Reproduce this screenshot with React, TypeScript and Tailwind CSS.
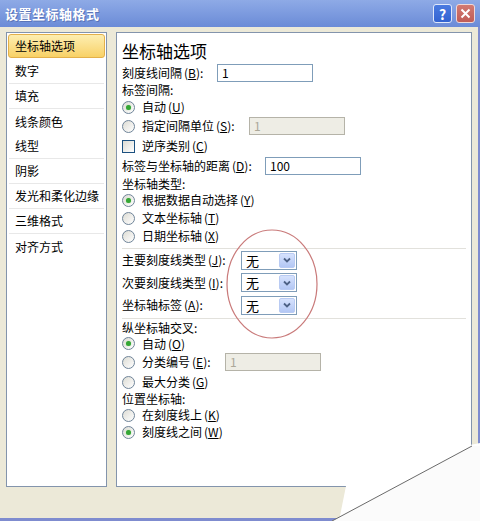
import React from "react"

function Key({ k }: { k: string }) {
  return (
    <span className="ml-[2px]">
      (<span className="underline">{k}</span>)
    </span>
  )
}

function Radio({ checked }: { checked?: boolean }) {
  return (
    <span className="flex h-[13px] w-[13px] shrink-0 items-center justify-center rounded-full border border-[#6f8499] bg-linear-to-br from-[#dddcd4] to-white">
      {checked && <span className="h-[5px] w-[5px] rounded-full bg-[#35a635] shadow-[0_0_1px_#7fd07f]" />}
    </span>
  )
}

function TextBox({ value, disabled, width }: { value: string; disabled?: boolean; width: string }) {
  return (
    <div
      className={
        disabled
          ? `flex h-[18px] ${width} items-center border border-[#b5b3a8] bg-[#eeede5] pl-[4px] text-[#aca899]`
          : `flex h-[18px] ${width} items-center border border-[#7f9db9] bg-white pl-[4px]`
      }
    >
      {value}
    </div>
  )
}

function Select() {
  return (
    <div className="flex h-[19px] w-[56px] items-center justify-between border border-[#7f9db9] bg-white p-px pl-[4px]">
      <span className="text-[13px]">无</span>
      <span className="flex h-[15px] w-[16px] items-center justify-center rounded-[2px] border border-[#b9cbf3] bg-linear-to-b from-[#d6e2fd] to-[#b3c7f4]">
        <svg width="8" height="6" viewBox="0 0 8 6">
          <path d="M1 1.5 L4 4.5 L7 1.5" fill="none" stroke="#4d6185" strokeWidth="1.8" />
        </svg>
      </span>
    </div>
  )
}

function RadioRow({ h, checked, children }: { h: string; checked?: boolean; children: React.ReactNode }) {
  return (
    <div className={`flex ${h} items-center`}>
      <Radio checked={checked} />
      <span className="ml-[7px] flex items-center">{children}</span>
    </div>
  )
}

const navItems = [
  { label: "数字", line: true },
  { label: "填充", line: true },
  { label: "线条颜色", line: false },
  { label: "线型", line: true },
  { label: "阴影", line: true },
  { label: "发光和柔化边缘", line: true },
  { label: "三维格式", line: true },
  { label: "对齐方式", line: false },
]

export default function App() {
  return (
    <div className="relative flex h-[521px] w-[480px] flex-col overflow-hidden bg-white font-['Noto_Sans_CJK_SC',sans-serif] text-[12px] leading-none text-black">
      {/* Title bar */}
      <div className="flex h-[27px] shrink-0 items-center justify-between bg-linear-to-b from-[#8eaae6] to-[#6b8bd7] pl-[5px] pr-[5px]">
        <span className="text-[13px] font-bold tracking-[0.5px] text-white [text-shadow:1px_1px_0_#5a74b8]">设置坐标轴格式</span>
        <div className="flex gap-[4px]">
          <div className="flex h-[19px] w-[19px] items-center justify-center rounded-[3px] border border-[#dfe8fb] bg-linear-to-b from-[#4a7ae0] to-[#3363d1] text-[14px] font-bold text-white">?</div>
          <div className="flex h-[19px] w-[19px] items-center justify-center rounded-[3px] border border-[#f0d8d6] bg-linear-to-b from-[#d27a72] to-[#c05c56]">
            <svg width="11" height="11" viewBox="0 0 11 11">
              <path d="M1.5 1.5 L9.5 9.5 M9.5 1.5 L1.5 9.5" stroke="white" strokeWidth="2" />
            </svg>
          </div>
        </div>
      </div>

      {/* Body */}
      <div className="flex flex-1 gap-[9px] border-b-[3px] border-r-2 border-[#7f8ccf] bg-[#ece9d8] pl-[6px] pt-[5px]">
        {/* Category list */}
        <div className="flex h-[455px] w-[101px] flex-col border border-[#8394ac] bg-white">
          <div className="mx-px mt-px flex h-[24px] items-center rounded-[3px] border border-[#e3b04a] bg-linear-to-b from-[#fdeeb0] to-[#f8d165] pl-[6px]">
            坐标轴选项
          </div>
          <div className="mt-px flex flex-col">
            {navItems.map(item => (
              <div
                key={item.label}
                className={
                  item.line
                    ? "mx-[2px] flex h-[25px] items-center border-b border-[#e8e8e8] pl-[6px]"
                    : "mx-[2px] flex h-[25px] items-center pl-[6px]"
                }
              >
                {item.label}
              </div>
            ))}
          </div>
        </div>

        {/* Options panel */}
        <div className="flex h-[455px] w-[356px] flex-col border border-[#8394ac] bg-white pl-[5px]">
          <div className="flex h-[31px] items-center pt-[4px] text-[17px]">坐标轴选项</div>

          <div className="flex h-[18px] items-center">
            <span className="flex w-[95px] items-center">刻度线间隔<Key k="B" />:</span>
            <TextBox value="1" width="w-[96px]" />
          </div>
          <div className="flex h-[16px] items-center">标签间隔:</div>
          <RadioRow h="h-[18px]" checked>
            自动<Key k="U" />
          </RadioRow>
          <div className="flex h-[20px] items-center">
            <span className="flex w-[127px] items-center">
              <Radio />
              <span className="ml-[7px] flex items-center">指定间隔单位<Key k="S" />:</span>
            </span>
            <TextBox value="1" width="w-[96px]" disabled />
          </div>
          <div className="flex h-[20px] items-center">
            <span className="h-[13px] w-[13px] border border-[#1c5180] bg-linear-to-br from-[#dcdbd3] to-white" />
            <span className="ml-[7px] flex items-center">逆序类别<Key k="C" /></span>
          </div>
          <div className="flex h-[20px] items-center">
            <span className="flex w-[143px] items-center">标签与坐标轴的距离<Key k="D" />:</span>
            <TextBox value="100" width="w-[96px]" />
          </div>
          <div className="flex h-[15px] items-center">坐标轴类型:</div>
          <RadioRow h="h-[18px]" checked>
            根据数据自动选择<Key k="Y" />
          </RadioRow>
          <RadioRow h="h-[18px]">
            文本坐标轴<Key k="T" />
          </RadioRow>
          <RadioRow h="h-[18px]">
            日期坐标轴<Key k="X" />
          </RadioRow>

          <div className="mr-[5px] mt-[3px] h-px bg-[#e2e1dc]" />

          <div className="flex h-[22px] items-center">
            <span className="flex w-[119px] items-center">主要刻度线类型<Key k="J" />:</span>
            <Select />
          </div>
          <div className="flex h-[23px] items-center">
            <span className="flex w-[119px] items-center">次要刻度线类型<Key k="I" />:</span>
            <Select />
          </div>
          <div className="flex h-[22px] items-center">
            <span className="flex w-[119px] items-center">坐标轴标签<Key k="A" />:</span>
            <Select />
          </div>

          <div className="mr-[5px] mt-[2px] h-px bg-[#e2e1dc]" />

          <div className="flex h-[17px] items-center">纵坐标轴交叉:</div>
          <RadioRow h="h-[15px]" checked>
            自动<Key k="O" />
          </RadioRow>
          <div className="flex h-[22px] items-center">
            <span className="flex w-[103px] items-center">
              <Radio />
              <span className="ml-[7px] flex items-center">分类编号<Key k="E" />:</span>
            </span>
            <TextBox value="1" width="w-[96px]" disabled />
          </div>
          <RadioRow h="h-[18px]">
            最大分类<Key k="G" />
          </RadioRow>
          <div className="flex h-[16px] items-center">位置坐标轴:</div>
          <RadioRow h="h-[16px]">
            在刻度线上<Key k="K" />
          </RadioRow>
          <RadioRow h="h-[18px]" checked>
            刻度线之间<Key k="W" />
          </RadioRow>
        </div>
      </div>

      {/* Annotation ellipse and page curl */}
      <svg className="pointer-events-none absolute left-0 top-0" width="480" height="521" viewBox="0 0 480 521">
        <ellipse cx="272" cy="284" rx="45" ry="54" fill="none" stroke="#c97a7a" strokeWidth="1.2" />
        <polygon points="346,486 470,445 480,443 480,521 339,521" fill="#ffffff" />
        <polygon points="332,521 472,446 480,446 480,521" fill="#fbfbfb" />
        <line x1="332" y1="521" x2="472" y2="446" stroke="#6a6a6a" strokeWidth="1" />
      </svg>
    </div>
  )
}
